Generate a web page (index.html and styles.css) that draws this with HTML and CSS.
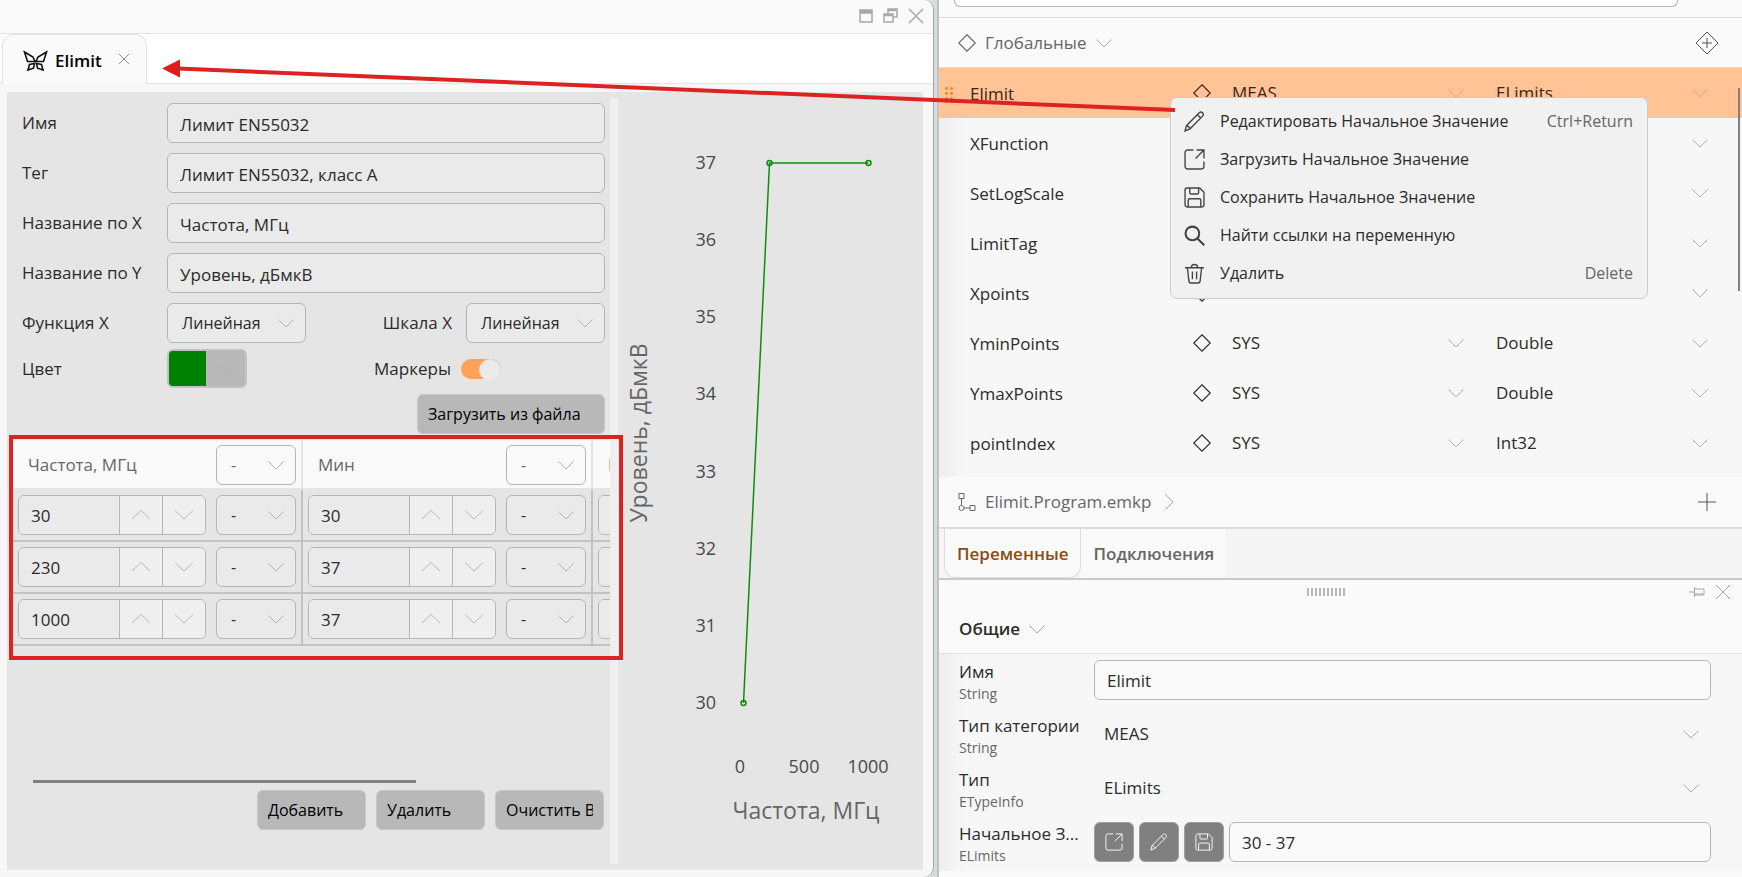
FILE: index.html
```html
<!doctype html>
<html lang="ru">
  <head>
    <meta charset="UTF-8" />
    <meta name="viewport" content="width=device-width, initial-scale=1.0" />
    <title>Elimit</title>
    <link rel="stylesheet" href="styles.css">
  </head>
  <body>
    <svg class="sprite" aria-hidden="true">
      <symbol id="down" viewBox="0 0 16 16"><path d="M.5 4.500 8 12l7.500-7.500" /></symbol>
      <symbol id="spin-up" viewBox="0 0 20 20"><path d="M1 14l9-8.500 9 8.500" /></symbol>
      <symbol id="spin-down" viewBox="0 0 20 20"><path d="M1 5.500l9 8.500 9-8.500" /></symbol>
      <symbol id="right" viewBox="0 0 16 16"><path d="M4.500.5 12 8l-7.500 7.500" /></symbol>
      <symbol id="close" viewBox="0 0 16 16"><path d="M1 1l14 14M15 1L1 15" /></symbol>
      <symbol id="diamond" viewBox="0 0 20 20"><path d="M10 2.500l7.500 7.500-7.500 7.500L2.500 10z" /></symbol>
      <symbol id="pencil" viewBox="0 0 20 20">
        <path d="M1 19l1.300-5L14.500 1.700c1-1 2.200-.8 3.100 0 .9.9 1.100 2.100.1 3.200L5.700 17zM12.800 3.500l3.400 3.400M2.300 14c1.500.2 2.800 1.400 3.200 3" />
      </symbol>
      <symbol id="open" viewBox="0 0 20 20">
        <path d="M9 1H3.500A2.500 2.500 0 0 0 1 3.500v13A2.500 2.500 0 0 0 3.500 19h13a2.500 2.500 0 0 0 2.500-2.500V12M11 9l8-8M12 1h7v8" />
      </symbol>
      <symbol id="save" viewBox="0 0 20 20">
        <path d="M3 1h12l4 4v12a2 2 0 0 1-2 2H3a2 2 0 0 1-2-2V3a2 2 0 0 1 2-2zM5.500 1v4.500c0 .8.400 1.200 1.200 1.200h6c.8 0 1.200-.4 1.200-1.200V1M4 19v-6.500c0-.8.5-1.300 1.300-1.300h9.400c.8 0 1.300.5 1.300 1.300V19" />
      </symbol>
      <symbol id="search" viewBox="0 0 20 20"><circle cx="8" cy="8" r="6.500" /><path d="M12.800 12.800l6.500 6.500" /></symbol>
      <symbol id="trash" viewBox="0 0 20 20">
        <path d="M1 4.500h18M7 4.300C7 .5 13 .5 13 4.300M3.200 4.500l1.400 12.300c.1 1.400.9 2.200 2.200 2.200h6.400c1.300 0 2.100-.8 2.200-2.200l1.400-12.300M8 8v7.500M12 8v7.500" />
      </symbol>
    </svg>

    <div class="app">
      <section class="window">
        <header class="titlebar">
          <button class="icon-btn" aria-label="Развернуть">
            <svg width="14" height="14"><path d="M1 1h12v12H1zM1 2.500h12M1 4h12" /></svg>
          </button>
          <button class="icon-btn" aria-label="Восстановить">
            <svg width="15" height="15"><path d="M5 5V1h9v8h-4M5 2.500h9M1 6h9v8H1zM1 7.500h9" /></svg>
          </button>
          <button class="icon-btn" aria-label="Закрыть">
            <svg width="16" height="16"><use href="#close" /></svg>
          </button>
        </header>

        <nav class="tabs">
          <div class="tab">
            <svg class="logo" width="25" height="22" viewBox="0 0 25 22">
              <path d="M1.500 2l8.500 5 2 4.500H4.500zM23.500 2L15 7l-2 4.500h7.500zM11.500 13.500l-5 1L5 20l5.500-1.800zM13.500 13.500l5 1L20 20l-5.500-1.800z" />
            </svg>
            <a href="#elimit">Elimit</a>
            <button class="icon-btn" aria-label="Закрыть вкладку">
              <svg width="12" height="12"><use href="#close" /></svg>
            </button>
          </div>
        </nav>

        <div class="editor" id="elimit">
          <form class="form">
            <div class="field">
              <label for="name">Имя</label>
              <input class="box" id="name" value="Лимит EN55032">
            </div>
            <div class="field">
              <label for="tag">Тег</label>
              <input class="box" id="tag" value="Лимит EN55032, класс A">
            </div>
            <div class="field">
              <label for="xname">Название по X</label>
              <input class="box" id="xname" value="Частота, МГц">
            </div>
            <div class="field">
              <label for="yname">Название по Y</label>
              <input class="box" id="yname" value="Уровень, дБмкВ">
            </div>
            <div class="field">
              <label for="xfunc">Функция X</label>
              <div class="pair">
                <span class="select boxed">
                  <select id="xfunc"><option>Линейная</option></select>
                  <svg width="16" height="16"><use href="#down" /></svg>
                </span>
                <label for="xscale">Шкала X</label>
                <span class="select boxed">
                  <select id="xscale"><option>Линейная</option></select>
                  <svg width="16" height="16"><use href="#down" /></svg>
                </span>
              </div>
            </div>
            <div class="field color-row">
              <label for="color">Цвет</label>
              <div class="pair">
                <button class="color" id="color" type="button" aria-label="Цвет">
                  <span class="swatch"></span>
                  <svg width="14" height="14"><use href="#down" /></svg>
                </button>
                <label for="markers">Маркеры</label>
                <input class="toggle" id="markers" type="checkbox" checked>
              </div>
            </div>
            <button class="btn load" type="button">Загрузить из файла</button>

            <div class="limits">
              <div class="limits-view">
                <table class="limits-table">
                  <thead><tr id="limits-head"></tr></thead>
                  <tbody id="limits-body"></tbody>
                </table>
              </div>
              <div class="frame"></div>
            </div>

            <div class="hscroll"></div>
            <div class="actions">
              <button class="btn" type="button">Добавить</button>
              <button class="btn" type="button">Удалить</button>
              <button class="btn" type="button">Очистить Все</button>
            </div>
          </form>

          <div class="splitter"></div>

          <svg class="chart" viewBox="0 0 305 778">
            <g class="ticks" id="yticks"></g>
            <g class="ticks x">
              <text x="122" y="681">0</text>
              <text x="186" y="681">500</text>
              <text x="250" y="681">1000</text>
            </g>
            <text class="axis" x="188" y="727">Частота, МГц</text>
            <text class="axis" transform="translate(29 341) rotate(-90)">Уровень, дБмкВ</text>
            <g class="series">
              <path d="M125.500 611L151.500 71H250.500" />
              <circle cx="125.500" cy="611" r="2.500" />
              <circle cx="151.500" cy="71" r="2.500" />
              <circle cx="250.500" cy="71" r="2.500" />
            </g>
          </svg>
        </div>
      </section>

      <section class="side">
        <div class="search-strip"><input class="box" aria-label="Поиск"></div>
        <header class="group-head">
          <svg width="22" height="22"><use href="#diamond" /></svg>
          <h2>Глобальные</h2>
          <svg class="chev" width="16" height="16"><use href="#down" /></svg>
          <button class="icon-btn add" aria-label="Добавить переменную">
            <svg width="24" height="24"><path d="M12 1l11 11-11 11L1 12zM12 7v10M7 12h10" /></svg>
          </button>
        </header>

        <div class="vars">
          <table class="vars-table">
            <tbody id="vars-body"></tbody>
          </table>
          <div class="vscroll"></div>
          <menu class="context">
            <li><button><svg><use href="#pencil" /></svg>Редактировать Начальное Значение<kbd>Ctrl+Return</kbd></button></li>
            <li><button><svg><use href="#open" /></svg>Загрузить Начальное Значение</button></li>
            <li><button><svg><use href="#save" /></svg>Сохранить Начальное Значение</button></li>
            <li><button><svg class="bold"><use href="#search" /></svg>Найти ссылки на переменную</button></li>
            <li><button><svg><use href="#trash" /></svg>Удалить<kbd>Delete</kbd></button></li>
          </menu>
        </div>

        <header class="group-head program">
          <svg width="22" height="22" viewBox="0 0 22 22">
            <path d="M3 2.500h5v5H3zM5.500 8v6M8 17h6M14 14.500h5v5h-5z" /><circle cx="5.500" cy="17" r="2.500" />
          </svg>
          <h2>Elimit.Program.emkp</h2>
          <svg class="chev" width="16" height="16"><use href="#right" /></svg>
          <button class="icon-btn add" aria-label="Добавить">
            <svg width="24" height="24"><path d="M12 3v18M3 12h18" /></svg>
          </button>
        </header>

        <nav class="bottom-tabs">
          <a class="active" href="#vars">Переменные</a>
          <a href="#links">Подключения</a>
        </nav>

        <div class="props">
          <div class="props-bar">
            <span class="grip"></span>
            <button class="icon-btn" aria-label="Закрепить">
              <svg width="16" height="12"><path d="M0 6h5M5.500 1v10M6 3h9v6H6M6 8h9" /></svg>
            </button>
            <button class="icon-btn" aria-label="Закрыть панель">
              <svg width="16" height="16"><use href="#close" /></svg>
            </button>
          </div>
          <h3>Общие <svg class="chev" width="16" height="16"><use href="#down" /></svg></h3>
          <div class="props-list">
            <div class="prop">
              <label for="p-name">Имя<small>String</small></label>
              <input class="box" id="p-name" value="Elimit">
            </div>
            <div class="prop">
              <label for="p-cat">Тип категории<small>String</small></label>
              <span class="select">
                <select id="p-cat"><option>MEAS</option></select>
                <svg width="16" height="16"><use href="#down" /></svg>
              </span>
            </div>
            <div class="prop">
              <label for="p-type">Тип<small>ETypeInfo</small></label>
              <span class="select">
                <select id="p-type"><option>ELimits</option></select>
                <svg width="16" height="16"><use href="#down" /></svg>
              </span>
            </div>
            <div class="prop">
              <label for="p-init">Начальное З...<small>ELimits</small></label>
              <div class="init">
                <button class="dark" aria-label="Загрузить"><svg><use href="#open" /></svg></button>
                <button class="dark" aria-label="Редактировать"><svg><use href="#pencil" /></svg></button>
                <button class="dark" aria-label="Сохранить"><svg><use href="#save" /></svg></button>
                <input class="box" id="p-init" value="30 - 37">
              </div>
            </div>
          </div>
        </div>
      </section>

      <svg class="arrow" width="1180" height="120">
        <path class="line" d="M1175 110L178 68.500" />
        <path class="head" d="M162 68.500l18-9v18z" />
      </svg>
    </div>

    <script src="script.js"></script>
  </body>
</html>
```

FILE: styles.css
```css
* {
  box-sizing: border-box;
}

body {
  margin: 0;
  background-color: #d9dbdb;
  color: #2b2b2b;
  font-family: "Open Sans", "Noto Sans", sans-serif;
  font-size: 17px;
  line-height: 24px;
}

input,
select,
button,
kbd {
  font: inherit;
  color: inherit;
}

svg {
  flex: none;
  fill: none;
  stroke: currentColor;
}

button {
  border: 0;
  padding: 0;
  background: none;
}

h2,
h3 {
  margin: 0;
  font-size: 17px;
}

.sprite {
  position: absolute;
  width: 0;
  height: 0;
}

.app {
  position: relative;
  display: grid;
  grid-template-columns: 934fr 805fr;
  gap: 3px;
  min-height: 100vh;
}

.icon-btn {
  display: flex;
  color: #a8a8a8;
}

.box {
  width: 100%;
  min-width: 0;
  height: 40px;
  padding: 2px 12px 0;
  border: 1px solid #b5b5b5;
  border-radius: 6px;
  background-color: #eaeaea;
}

/* selects */

.select {
  position: relative;
  display: block;
  height: 40px;
}

.select select {
  width: 100%;
  height: 100%;
  padding: 0 14px;
  border: 0;
  border-radius: 6px;
  background: none;
  appearance: none;
}

.select svg {
  position: absolute;
  top: 12px;
  right: 12px;
  color: #b0b0b0;
  pointer-events: none;
}

.boxed select {
  border: 1px solid #b5b5b5;
  background-color: #eaeaea;
  font-size: 16px;
}

/* editor window */

.window {
  display: flex;
  flex-direction: column;
  min-width: 0;
  border-right: 1px solid #a5a5a5;
  border-radius: 0 10px 10px 0;
  background-color: #f7f7f7;
}

.titlebar {
  display: flex;
  align-items: center;
  justify-content: flex-end;
  gap: 10px;
  height: 34px;
  padding: 0 9px 2px 0;
  border-bottom: 1px solid #e3e3e3;
  border-top-right-radius: 10px;
  background-color: #fafafa;
  stroke-width: 1.5;
}

.tabs {
  height: 50px;
  padding-left: 2px;
  border-bottom: 1px solid #e3e3e3;
  background-color: #fff;
}

.tab {
  display: flex;
  align-items: center;
  gap: 7px;
  width: 145px;
  height: 50px;
  padding: 3px 16px 0 20px;
  border: 1px solid #e3e3e3;
  border-bottom: 0;
  border-radius: 12px 12px 0 0;
  background-color: #fafafa;
}

.tab a {
  flex: 1;
  color: #000;
  font-weight: 600;
  text-decoration: none;
}

.tab .icon-btn {
  padding-bottom: 4px;
  color: #666;
}

.logo {
  stroke: #111;
  stroke-width: 1.6;
}

.editor {
  display: grid;
  grid-template-columns: 603fr 8px 305fr;
  flex: 1;
  margin: 8px 10px 7px 7px;
  background-color: #e5e5e5;
}

.form {
  display: flex;
  flex-direction: column;
  min-width: 0;
  padding: 11px 5px 40px 15px;
}

.field {
  display: grid;
  grid-template-columns: 145px 1fr;
  align-items: center;
  margin-bottom: 10px;
}

.pair {
  display: flex;
  align-items: center;
}

.pair label {
  margin-left: auto;
  padding-right: 14px;
}

.pair .select {
  width: 139px;
}

.color-row {
  margin: -4px 0 6px;
}

.color-row label {
  padding-right: 10px;
}

.color {
  display: flex;
  align-items: center;
  gap: 14px;
  width: 80px;
  height: 39px;
  border: 2px solid #c2c2c2;
  border-radius: 6px;
  background-color: #b8b8b8;
  color: #b0b0b0;
  overflow: hidden;
}

.swatch {
  width: 37px;
  height: 35px;
  background-color: #008000;
}

.toggle {
  width: 40px;
  height: 20px;
  margin: 0 104px 0 0;
  border-radius: 10px;
  background-color: #ffa159;
  appearance: none;
}

.toggle::before {
  content: "";
  display: block;
  width: 20px;
  height: 20px;
  margin-left: auto;
  border: 1px solid #eadfd6;
  border-radius: 50%;
  background-color: #ebebeb;
}

.btn {
  height: 40px;
  padding: 0 10px;
  border: 1px solid #c6c6c6;
  border-radius: 6px;
  background-color: #b8b8b8;
  color: #000;
  font-size: 16px;
  text-align: left;
  white-space: nowrap;
}

.load {
  align-self: flex-end;
  width: 188px;
}

.limits {
  position: relative;
  flex: 1;
  margin: 6px -5px 0 -9px;
}

.limits-view {
  overflow: hidden;
}

.limits-table {
  width: 870px;
  border-collapse: separate;
  border-spacing: 0;
  table-layout: fixed;
}

.limits-table th,
.limits-table td {
  padding: 5px;
  border-right: 2px solid #c2c2c2;
  border-bottom: 2px solid #c2c2c2;
}

.limits-table th {
  padding-bottom: 3px;
  border-color: #e5e5e5;
  background-color: #fafafa;
  color: #666;
  font-weight: 400;
  text-align: left;
}

.limits-table th .boxed select {
  background-color: #fafafa;
}

.cell {
  display: flex;
  align-items: center;
  justify-content: space-between;
}

.cell > span:first-child {
  padding-left: 10px;
}

.cell .select {
  width: 80px;
}

.spin {
  display: grid;
  grid-template-columns: 1fr 43px 43px;
  width: 188px;
  height: 40px;
  border: 1px solid #b5b5b5;
  border-radius: 6px;
  overflow: hidden;
}

.spin input {
  min-width: 0;
  padding: 2px 12px 0;
  border: 0;
  background-color: #eaeaea;
}

.spin button {
  display: flex;
  align-items: center;
  justify-content: center;
  border-left: 1px solid #b5b5b5;
  background-color: #efefef;
  color: #b5b5b5;
}

/* annotation around the limits table */
.frame {
  position: absolute;
  top: -5px;
  right: -13px;
  left: -4px;
  height: 225px;
  border: 4px solid #dc2323;
}

.hscroll {
  width: 383px;
  height: 3px;
  margin: 0 0 7px 11px;
  background-color: #808080;
}

.actions {
  display: flex;
  justify-content: flex-end;
  gap: 10px;
  padding-right: 1px;
}

.actions .btn {
  width: 109px;
  overflow: clip;
  overflow-clip-margin: content-box;
}

.splitter {
  margin: 6px 0;
  background-color: #efefef;
}

/* sized by the grid cell only, so it never stretches the window */
.chart {
  width: 100%;
  height: 100%;
  contain: size;
}

.chart text {
  fill: #4a4a4a;
  stroke: none;
  font-size: 18px;
  text-anchor: end;
}

.chart .x text {
  text-anchor: middle;
}

.chart .axis {
  fill: #666;
  font-size: 23px;
  text-anchor: middle;
}

.series {
  stroke: #128a12;
  stroke-width: 1.5;
}

/* right side */

.side {
  display: flex;
  flex-direction: column;
  min-width: 0;
  border-left: 2px solid #bcc4c5;
  background-color: #fafafa;
}

.search-strip {
  height: 18px;
  padding: 0 64px 0 15px;
  border-bottom: 1px solid #dcdcdc;
  overflow: hidden;
}

.search-strip .box {
  display: block;
  height: 7px;
  border-top: 0;
  border-radius: 0 0 6px 6px;
  background-color: #fcfcfc;
}

.group-head {
  display: flex;
  align-items: center;
  height: 50px;
  padding: 0 23px 0 17px;
  border-bottom: 1px solid #dcdcdc;
  color: #666;
}

.group-head h2 {
  margin: 0 10px 0 7px;
  font-weight: 400;
}

.group-head .add {
  margin-left: auto;
  color: #555;
}

.chev {
  color: #a8a8a8;
}

.vars {
  position: relative;
  padding-bottom: 9px;
  background: linear-gradient(to right, #eee, #f7f7f7 26px);
}

.vars-table {
  width: 100%;
  border-spacing: 0;
  table-layout: fixed;
}

.vars-table td {
  height: 50px;
  padding: 0;
}

.vars-table .name {
  width: 252px;
  padding: 2px 0 0 31px;
}

.vars-table .icon {
  width: 27px;
}

.vars-table .icon svg {
  display: block;
}

.vars-table .type {
  width: 264px;
}

.vars-table .select svg {
  right: 34px;
}

.vars-table .type .select svg {
  right: 18px;
}

.selected {
  position: relative;
  background-color: #ffc396;
  color: #3d2412;
}

.selected .select svg {
  color: #d3a988;
}

/* drag handle of the selected row */
.selected .name::before {
  content: "";
  position: absolute;
  top: 18px;
  left: 5px;
  width: 10px;
  height: 17px;
  background: radial-gradient(circle, #f08a24 1px, transparent 2px) 0 0 / 5px 5px;
}

.vscroll {
  position: absolute;
  top: 20px;
  right: 2px;
  width: 2px;
  height: 203px;
  background-color: #808080;
}

.context {
  position: absolute;
  top: 29px;
  right: 94px;
  width: 478px;
  margin: 0;
  padding: 4px 0 6px;
  border: 1px solid #cdcdcd;
  border-radius: 7px;
  background-color: #f1f1f1;
  font-size: 16px;
  list-style: none;
}

.context button {
  display: flex;
  align-items: center;
  width: 100%;
  height: 38px;
  padding: 0 14px 0 13px;
}

.context svg {
  width: 21px;
  height: 21px;
  margin-right: 15px;
  stroke: #444;
  stroke-width: 1.3;
}

.context .bold {
  stroke-width: 2;
}

.context kbd {
  margin-left: auto;
  color: #666;
}

.program {
  border-bottom: 2px solid #dcdcdc;
  height: 52px;
}

.bottom-tabs {
  display: flex;
  height: 51px;
  padding-left: 5px;
  border-bottom: 2px solid #c6cccd;
  background-color: #f5f5f5;
}

.bottom-tabs a {
  height: 49px;
  padding: 13px 12px 0;
  background-color: #fafafa;
  color: #666;
  font-weight: 600;
  text-decoration: none;
}

.bottom-tabs .active {
  border: 1px solid #dcdcdc;
  border-top: 0;
  border-radius: 0 0 12px 12px;
  color: #8a4b14;
}

.props {
  flex: 1;
  background-color: #fafafa;
}

.props-bar {
  display: grid;
  grid-template-columns: 1fr auto 1fr auto auto;
  align-items: center;
  gap: 10px;
  height: 24px;
  padding-right: 11px;
}

.props-bar .grip {
  grid-column: 2;
  margin-left: 36px;
}

.props-bar .icon-btn:nth-child(2) {
  grid-column: 4;
}

.grip {
  width: 40px;
  height: 8px;
  background: repeating-linear-gradient(to right, #b8b8b8 0 2px, transparent 2px 4px);
}

.props h3 {
  display: flex;
  align-items: center;
  gap: 9px;
  height: 50px;
  padding-left: 20px;
  border-bottom: 1px solid #e0e0e0;
  font-weight: 600;
}

.props-list {
  padding-bottom: 1px;
  background: linear-gradient(to right, #eee, #f7f7f7 26px);
}

.prop {
  display: grid;
  grid-template-columns: 135px 1fr;
  align-items: center;
  height: 54px;
  padding: 0 31px 4px 20px;
}

.prop label {
  padding-top: 7px;
  line-height: 22px;
  white-space: nowrap;
}

.prop small {
  display: block;
  color: #666;
  font-size: 14px;
}

.prop .box {
  background-color: #fafafa;
}

.prop .select select {
  padding: 0 10px;
}

.init {
  display: flex;
  gap: 5px;
}

.dark {
  display: flex;
  flex: none;
  align-items: center;
  justify-content: center;
  width: 40px;
  height: 40px;
  border: 1px solid #a0a0a0;
  border-radius: 6px;
  background-color: #808080;
  color: #fff;
}

.dark svg {
  width: 18px;
  height: 18px;
}

/* red pointer from the menu to the tab */
.arrow {
  position: absolute;
  top: 0;
  left: 0;
  pointer-events: none;
}

.arrow .line {
  stroke: #dc2323;
  stroke-width: 4;
}

.arrow .head {
  fill: #e01b1b;
  stroke: none;
}
```

FILE: script.js
```js
const columns = ["Частота, МГц", "Мин", "Макс"];
const limits = [
  [30, 30, 30],
  [230, 37, 37],
  [1000, 37, 37],
];

const variables = [
  ["Elimit", "MEAS", "ELimits"],
  ["XFunction", "SYS", "Int32"],
  ["SetLogScale", "SYS", "Boolean"],
  ["LimitTag", "SYS", "String"],
  ["Xpoints", "SYS", "Double"],
  ["YminPoints", "SYS", "Double"],
  ["YmaxPoints", "SYS", "Double"],
  ["pointIndex", "SYS", "Int32"],
];

function icon(name, size) {
  return `<svg width="${size}" height="${size}"><use href="#${name}" /></svg>`;
}

function select(value, label, boxed) {
  return `<span class="select ${boxed ? "boxed" : ""}">
    <select aria-label="${label}"><option>${value}</option></select>${icon("down", 16)}
  </span>`;
}

function spin(value, label) {
  return `<div class="spin">
    <input value="${value}" aria-label="${label}">
    <button type="button" aria-label="Больше">${icon("spin-up", 20)}</button>
    <button type="button" aria-label="Меньше">${icon("spin-down", 20)}</button>
  </div>`;
}

document.getElementById("limits-head").innerHTML = columns
  .map((name) => `<th><div class="cell"><span>${name}</span>${select("-", name, true)}</div></th>`)
  .join("");

document.getElementById("limits-body").innerHTML = limits
  .map((row) => {
    const cells = row.map(
      (value, i) => `<td><div class="cell">${spin(value, columns[i])}${select("-", "Множитель", true)}</div></td>`
    );
    return `<tr>${cells.join("")}</tr>`;
  })
  .join("");

document.getElementById("vars-body").innerHTML = variables
  .map(
    ([name, category, type], i) => `<tr class="${i === 0 ? "selected" : ""}">
      <td class="name">${name}</td>
      <td class="icon">${icon("diamond", 22)}</td>
      <td class="type">${select(category, "Категория " + name)}</td>
      <td>${select(type, "Тип " + name)}</td>
    </tr>`
  )
  .join("");

// y axis runs from 37 at the top down to 30
let ticks = "";
for (let value = 37; value >= 30; value--) {
  const y = Math.round(77 + ((37 - value) * 540) / 7);
  ticks += `<text x="98" y="${y}">${value}</text>`;
}
document.getElementById("yticks").innerHTML = ticks;
```
